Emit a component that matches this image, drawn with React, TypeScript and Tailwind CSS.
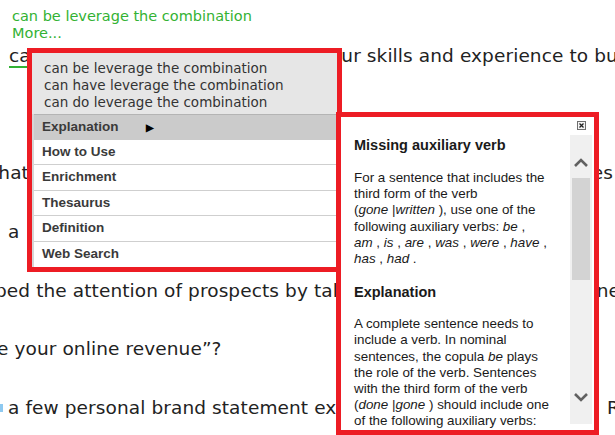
import React from "react";

const doc = "font-['DejaVu_Sans',sans-serif]";
const ui = "font-['Liberation_Sans',Arial,sans-serif]";

function Chevron({ up }: { up?: boolean }) {
  return (
    <svg width="16" height="10" viewBox="0 0 16 10">
      <polyline
        points={up ? "2,8 8,2 14,8" : "2,2 8,8 14,2"}
        fill="none"
        stroke="#616161"
        strokeWidth="2.6"
      />
    </svg>
  );
}

function SuggestMenu() {
  const items = ["How to Use", "Enrichment", "Thesaurus", "Definition", "Web Search"];
  return (
    <div className="absolute left-[27px] top-[48px] w-[315px] h-[224px] border-[5px] border-[#ed1c24] bg-white flex flex-col">
      <div className={`${doc} h-[61px] bg-[#e6e6e6] pt-[7px] pl-[12px] text-[13.5px] leading-[17px] text-[#333]`}>
        <div>can be leverage the combination</div>
        <div>can have leverage the combination</div>
        <div>can do leverage the combination</div>
      </div>
      <div className={`${ui} flex-1 flex flex-col border-l-[2px] border-[#d6d6d6] text-[13.5px] font-bold text-[#3a3a3a]`}>
        <div className="h-[26px] flex items-center pl-[8px] bg-[#cbcbcb] border-t border-[#b4b4b4]">
          <span className="w-[104px]">Explanation</span>
          <span className="text-[10px] text-black">▶</span>
        </div>
        {items.map((item) => (
          <div
            key={item}
            className="h-[25.4px] flex items-center pl-[8px] border-b border-[#cfcfcf] last:border-b-0"
          >
            {item}
          </div>
        ))}
      </div>
    </div>
  );
}

function ExplainPanel() {
  return (
    <div className="absolute left-[336px] top-[112px] w-[263px] h-[323px] border-[5px] border-[#ed1c24] bg-white flex">
      <div className={`${ui} flex-1 overflow-hidden pl-[13px] pt-[19px] text-[13.4px] leading-[16.2px] text-[#1a1a1a]`}>
        <div className="text-[14.5px] leading-[18px] font-bold">Missing auxiliary verb</div>
        <p className="mt-[16px]">
          For a sentence that includes the
          <br />
          third form of the verb
          <br />(<i>gone</i> |<i>written</i> ), use one of the
          <br />
          following auxiliary verbs: <i>be</i> ,
          <br />
          <i>am</i> , <i>is</i> , <i>are</i> , <i>was</i> , <i>were</i> , <i>have</i> ,
          <br />
          <i>has</i> , <i>had</i> .
        </p>
        <div className="mt-[16px] text-[14.5px] leading-[18px] font-bold">Explanation</div>
        <p className="mt-[15px]">
          A complete sentence needs to
          <br />
          include a verb. In nominal
          <br />
          sentences, the copula <i>be</i> plays
          <br />
          the role of the verb. Sentences
          <br />
          with the third form of the verb
          <br />(<i>done</i> |<i>gone</i> ) should include one
          <br />
          of the following auxiliary verbs:
        </p>
      </div>
      <div className="w-[24px] flex flex-col items-center pt-[4px] pb-[6px] pr-[2px]">
        <svg width="9" height="9" viewBox="0 0 9 9">
          <rect x="0.5" y="0.5" width="8" height="8" fill="#f4f4f4" stroke="#6e6e6e" />
          <path d="M2.5 2.5 L6.5 6.5 M6.5 2.5 L2.5 6.5" stroke="#222" strokeWidth="1.3" />
        </svg>
        <div className="mt-[5px] flex-1 w-[22px] bg-[#f0f0f0] flex flex-col items-center">
          <div className="mt-[23px]">
            <Chevron up />
          </div>
          <div className="mt-[10px] w-[18px] h-[102px] bg-[#d3d3d3]" />
          <div className="mt-auto mb-[22px]">
            <Chevron />
          </div>
        </div>
      </div>
    </div>
  );
}

export default function App() {
  return (
    <div className={`${doc} relative w-[615px] h-[435px] overflow-hidden bg-white`}>
      <div className="pt-[8px] pl-[12px] text-[14.5px] leading-[17px] text-[#33b233]">
        <div>can be leverage the combination</div>
        <div>More...</div>
      </div>

      <div className="mt-[4px] flex flex-col gap-[38.7px] text-[18.5px] leading-[20px] tracking-[0.1px] text-[#222] whitespace-nowrap">
        <div className="h-[20px] flex items-center">
          <span className="w-[3px] h-[6px] bg-[#8ec9f0] mr-[9px]" />
          <span>
            <span className="underline decoration-[#33b233] decoration-2 underline-offset-[4px]">can</span> leverage the
            combination of your skills and experience to build
          </span>
        </div>
        <div className="h-[20px]" />
        <div className="h-[20px] flex items-center">
          <span className="ml-[-9px]">that</span>
          <span className="ml-[2px] w-[4px] h-[12px] bg-[#f0a040]" />
          <span className="ml-auto mr-[2px]">es</span>
        </div>
        <div className="h-[20px] flex items-center">
          <span className="ml-[8px]">a</span>
        </div>
        <div className="h-[20px] flex items-center">
          <span className="ml-[-5px]">ped the attention of prospects by talking</span>
          <span className="ml-auto mr-[-5px]">ne</span>
        </div>
        <div className="h-[20px] flex items-center">
          <span className="ml-[-3px]">e your online revenue”?</span>
        </div>
        <div className="h-[20px] flex items-center">
          <span className="w-[3px] h-[8px] bg-[#8ec9f0] mr-[5px]" />
          <span>a few personal brand statement examples</span>
          <span className="ml-auto mr-[-5px]">R</span>
        </div>
      </div>

      <SuggestMenu />
      <ExplainPanel />
    </div>
  );
}
